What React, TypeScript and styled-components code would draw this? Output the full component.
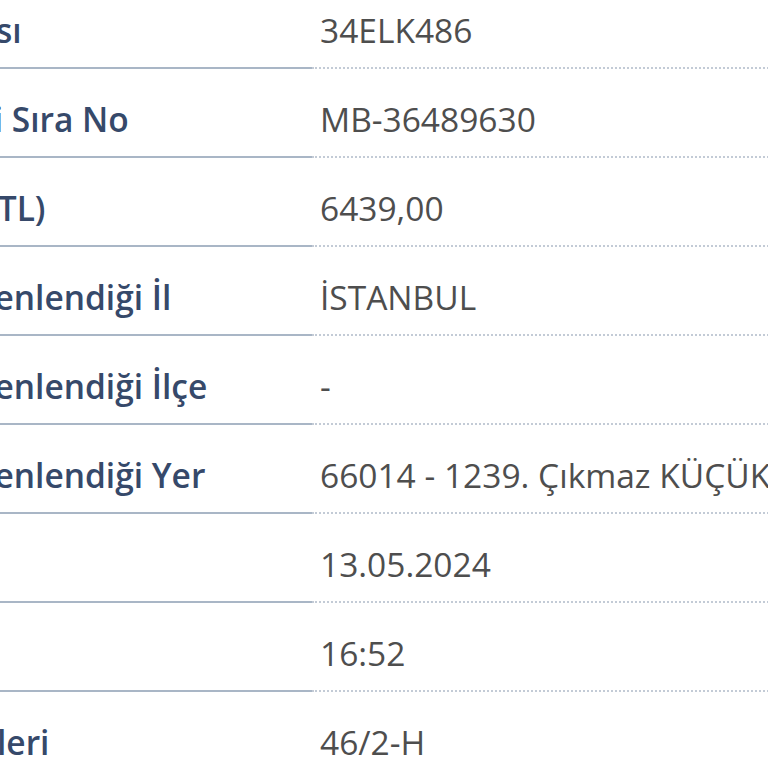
import React from "react";
import styled, { createGlobalStyle } from "styled-components";

const GlobalStyle = createGlobalStyle`
  html, body {
    margin: 0;
    padding: 0;
    background: #ffffff;
    overflow: hidden;
  }
  body {
    width: 768px;
    height: 768px;
  }
`;

const Viewport = styled.div`
  width: 768px;
  height: 768px;
  overflow: hidden;
  position: relative;
`;

const Table = styled.div`
  margin-left: -212px;
  margin-top: -20px;
  width: 1100px;
  display: flex;
  flex-direction: column;
  font-family: "Open Sans", "Noto Sans", sans-serif;
  font-size: 33.5px;
  line-height: 40px;
`;

const Row = styled.div`
  display: grid;
  grid-template-columns: 524px 1fr;
`;

const Label = styled.div<{ $indent: number }>`
  padding: 30px 0 17px ${(p) => 8 + p.$indent}px;
  border-bottom: 2px solid #a9b6c6;
  color: #36496a;
  font-weight: 600;
  white-space: nowrap;
  overflow: hidden;
`;

const Value = styled.div`
  padding: 30px 0 17px 8px;
  border-bottom: 2px dotted #c3cbd6;
  color: #4e4e4e;
  font-weight: 400;
  white-space: nowrap;
  overflow: hidden;
`;

const rows: { label: string; value: string; indent: number }[] = [
  { label: "Aracın Plakası", value: "34ELK486", indent: 0 },
  { label: "Tutanak Seri Sıra No", value: "MB-36489630", indent: 4 },
  { label: "Ceza Tutarı (TL)", value: "6439,00", indent: 1 },
  { label: "Cezanın Düzenlendiği İl", value: "İSTANBUL", indent: 0 },
  { label: "Cezanın Düzenlendiği İlçe", value: "-", indent: 0 },
  { label: "Cezanın Düzenlendiği Yer", value: "66014 - 1239. Çıkmaz KÜÇÜKÇEKMECE", indent: 0 },
  { label: "Ceza Tarihi", value: "13.05.2024", indent: 0 },
  { label: "Ceza Saati", value: "16:52", indent: 0 },
  { label: "Ceza Maddeleri", value: "46/2-H", indent: 5 },
];

export default function App() {
  return (
    <>
      <GlobalStyle />
      <Viewport>
        <Table>
          {rows.map((r) => (
            <Row key={r.label}>
              <Label $indent={r.indent}>{r.label}</Label>
              <Value>{r.value}</Value>
            </Row>
          ))}
        </Table>
      </Viewport>
    </>
  );
}
